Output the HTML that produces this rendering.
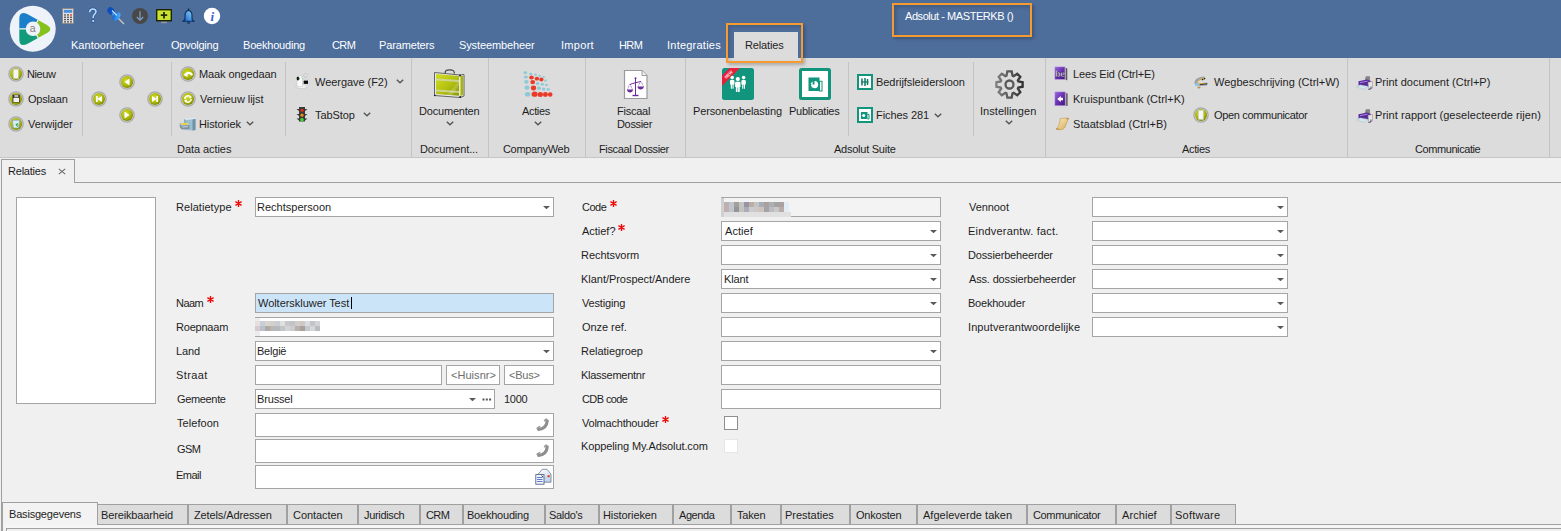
<!DOCTYPE html><html><head><meta charset="utf-8"><style>
html,body{margin:0;padding:0;}
body{width:1561px;height:531px;overflow:hidden;position:relative;background:#f0f0f0;font-family:"Liberation Sans",sans-serif;font-size:11px;color:#1e1e1e;}
.t{position:absolute;white-space:nowrap;line-height:13px;font-size:11px;}
</style></head><body>
<div style="position:absolute;left:0px;top:0px;width:1561px;height:58px;background:#4d6d9b"></div>
<div class="t" style="left:71px;top:39px;letter-spacing:0.025px;color:#ffffff;">Kantoorbeheer</div>
<div class="t" style="left:171px;top:39px;letter-spacing:-0.250px;color:#ffffff;">Opvolging</div>
<div class="t" style="left:243px;top:39px;letter-spacing:-0.200px;color:#ffffff;">Boekhouding</div>
<div class="t" style="left:332px;top:39px;letter-spacing:-0.600px;color:#ffffff;">CRM</div>
<div class="t" style="left:379px;top:39px;letter-spacing:-0.144px;color:#ffffff;">Parameters</div>
<div class="t" style="left:459px;top:39px;letter-spacing:-0.125px;color:#ffffff;">Systeembeheer</div>
<div class="t" style="left:561px;top:39px;letter-spacing:0.300px;color:#ffffff;">Import</div>
<div class="t" style="left:619px;top:39px;letter-spacing:-0.600px;color:#ffffff;">HRM</div>
<div class="t" style="left:667px;top:39px;letter-spacing:0.230px;color:#ffffff;">Integraties</div>
<div style="position:absolute;left:734px;top:32px;width:64px;height:27px;background:#dcdcdc"></div>
<div class="t" style="left:745px;top:39px;letter-spacing:-0.143px;">Relaties</div>
<div style="position:absolute;left:892px;top:3px;width:140px;height:34px;box-sizing:border-box;border:2px solid #f59b32;box-shadow:2px 2px 3px rgba(0,0,0,0.22), inset 2px 2px 4px rgba(0,0,0,0.18)"></div>
<div class="t" style="left:905px;top:10px;letter-spacing:-0.435px;color:#ffffff;">Adsolut - MASTERKB ()</div>
<div style="position:absolute;left:0px;top:58px;width:1561px;height:99px;background:#dcdcdc"></div>
<div style="position:absolute;left:0px;top:157px;width:1561px;height:1px;background:#c6c6c6"></div>
<div style="position:absolute;left:411px;top:58px;width:1px;height:99px;background:#c4c4c4"></div>
<div style="position:absolute;left:488px;top:58px;width:1px;height:99px;background:#c4c4c4"></div>
<div style="position:absolute;left:585px;top:58px;width:1px;height:99px;background:#c4c4c4"></div>
<div style="position:absolute;left:685px;top:58px;width:1px;height:99px;background:#c4c4c4"></div>
<div style="position:absolute;left:1045px;top:58px;width:1px;height:99px;background:#c4c4c4"></div>
<div style="position:absolute;left:1347px;top:58px;width:1px;height:99px;background:#c4c4c4"></div>
<div style="position:absolute;left:1549px;top:58px;width:1px;height:99px;background:#c4c4c4"></div>
<div style="position:absolute;left:82px;top:62px;width:1px;height:74px;background:#c4c4c4"></div>
<div style="position:absolute;left:171px;top:62px;width:1px;height:74px;background:#c4c4c4"></div>
<div style="position:absolute;left:285px;top:62px;width:1px;height:74px;background:#c4c4c4"></div>
<div style="position:absolute;left:848px;top:62px;width:1px;height:74px;background:#c4c4c4"></div>
<div style="position:absolute;left:973px;top:62px;width:1px;height:74px;background:#c4c4c4"></div>
<div style="position:absolute;left:726px;top:23px;width:77px;height:40px;box-sizing:border-box;border:2px solid #f59b32;box-shadow:2px 2px 3px rgba(0,0,0,0.22), inset 2px 2px 4px rgba(0,0,0,0.15)"></div>
<div class="t" style="left:27px;top:68px;letter-spacing:-0.400px;">Nieuw</div>
<div class="t" style="left:28px;top:93px;letter-spacing:-0.200px;">Opslaan</div>
<div class="t" style="left:28px;top:118px;letter-spacing:-0.062px;">Verwijder</div>
<div class="t" style="left:199px;top:68px;letter-spacing:-0.100px;">Maak ongedaan</div>
<div class="t" style="left:200px;top:93px;letter-spacing:-0.054px;">Vernieuw lijst</div>
<div class="t" style="left:199px;top:118px;letter-spacing:-0.113px;">Historiek</div>
<div class="t" style="left:315px;top:76px;letter-spacing:-0.050px;">Weergave (F2)</div>
<div class="t" style="left:315px;top:109px;letter-spacing:-0.067px;">TabStop</div>
<div class="t" style="left:177px;top:143px;letter-spacing:-0.060px;">Data acties</div>
<div class="t" style="left:419px;top:105px;letter-spacing:-0.189px;">Documenten</div>
<div class="t" style="left:420px;top:143px;letter-spacing:-0.120px;">Document...</div>
<div class="t" style="left:522px;top:105px;letter-spacing:-0.340px;">Acties</div>
<div class="t" style="left:503px;top:143px;letter-spacing:-0.333px;">CompanyWeb</div>
<div class="t" style="left:617px;top:105px;letter-spacing:-0.250px;">Fiscaal</div>
<div class="t" style="left:617px;top:118px;letter-spacing:-0.333px;">Dossier</div>
<div class="t" style="left:599px;top:143px;letter-spacing:-0.357px;">Fiscaal Dossier</div>
<div class="t" style="left:693px;top:105px;letter-spacing:-0.131px;">Personenbelasting</div>
<div class="t" style="left:789px;top:105px;letter-spacing:-0.250px;">Publicaties</div>
<div class="t" style="left:876px;top:76px;letter-spacing:-0.056px;">Bedrijfsleidersloon</div>
<div class="t" style="left:876px;top:109px;letter-spacing:-0.078px;">Fiches 281</div>
<div class="t" style="left:980px;top:105px;letter-spacing:0.055px;">Instellingen</div>
<div class="t" style="left:834px;top:143px;letter-spacing:-0.250px;">Adsolut Suite</div>
<div class="t" style="left:1073px;top:68px;letter-spacing:-0.138px;">Lees Eid (Ctrl+E)</div>
<div class="t" style="left:1073px;top:93px;letter-spacing:0.005px;">Kruispuntbank (Ctrl+K)</div>
<div class="t" style="left:1073px;top:118px;letter-spacing:0.039px;">Staatsblad (Ctrl+B)</div>
<div class="t" style="left:1214px;top:76px;letter-spacing:0.022px;">Wegbeschrijving (Ctrl+W)</div>
<div class="t" style="left:1214px;top:109px;letter-spacing:-0.331px;">Open communicator</div>
<div class="t" style="left:1182px;top:143px;letter-spacing:-0.340px;">Acties</div>
<div class="t" style="left:1375px;top:76px;letter-spacing:0.005px;">Print document (Ctrl+P)</div>
<div class="t" style="left:1375px;top:109px;letter-spacing:0.059px;">Print rapport (geselecteerde rijen)</div>
<div class="t" style="left:1415px;top:143px;letter-spacing:-0.418px;">Communicatie</div>
<div style="position:absolute;left:74px;top:182px;width:1487px;height:1px;background:#a0a0a0"></div>
<div style="position:absolute;left:1px;top:159px;width:74px;height:24px;box-sizing:border-box;border:1px solid #a0a0a0;border-bottom:none;background:#f0f0f0"></div>
<div style="position:absolute;left:1px;top:182px;width:1px;height:349px;background:#a0a0a0"></div>
<div class="t" style="left:8px;top:165px;letter-spacing:-0.214px;">Relaties</div>
<svg style="position:absolute;left:58px;top:168px" width="8" height="7" viewBox="0 0 8 7"><path d="M0.8 0.8 L7.2 6.2 M7.2 0.8 L0.8 6.2" stroke="#6a6a6a" stroke-width="1.1"/></svg>
<div style="position:absolute;left:16px;top:197px;width:140px;height:207px;box-sizing:border-box;border:1px solid #a5a5a5;background:#fff"></div>
<div class="t" style="left:176px;top:201px;letter-spacing:0.050px;">Relatietype</div>
<svg style="position:absolute;left:235px;top:200px" width="7" height="7" viewBox="0 0 7 7"><path d="M3.5 0 V7 M0.4 1.7 L6.6 5.3 M6.6 1.7 L0.4 5.3" stroke="#f00808" stroke-width="1.35"/></svg>
<div style="position:absolute;left:255px;top:197px;width:299px;height:20px;box-sizing:border-box;border:1px solid #a5a5a5;background:#fff"></div>
<div class="t" style="left:257px;top:201px;letter-spacing:0.017px;">Rechtspersoon</div>
<div class="t" style="left:176px;top:297px;letter-spacing:-0.533px;">Naam</div>
<svg style="position:absolute;left:207px;top:296px" width="7" height="7" viewBox="0 0 7 7"><path d="M3.5 0 V7 M0.4 1.7 L6.6 5.3 M6.6 1.7 L0.4 5.3" stroke="#f00808" stroke-width="1.35"/></svg>
<div style="position:absolute;left:255px;top:293px;width:299px;height:20px;box-sizing:border-box;border:1px solid #a5a5a5;background:#cce4f7"></div>
<div class="t" style="left:258px;top:297px;letter-spacing:-0.041px;">Wolterskluwer Test</div>
<div style="position:absolute;left:351px;top:297px;width:1px;height:12px;background:#000"></div>
<div class="t" style="left:176px;top:321px;letter-spacing:-0.214px;">Roepnaam</div>
<div style="position:absolute;left:255px;top:317px;width:299px;height:20px;box-sizing:border-box;border:1px solid #a5a5a5;background:#fff"></div>
<div class="t" style="left:176px;top:345px;letter-spacing:-0.133px;">Land</div>
<div style="position:absolute;left:255px;top:341px;width:299px;height:20px;box-sizing:border-box;border:1px solid #a5a5a5;background:#fff"></div>
<div class="t" style="left:257px;top:345px;letter-spacing:-0.220px;">België</div>
<div class="t" style="left:176px;top:369px;letter-spacing:0.400px;">Straat</div>
<div style="position:absolute;left:255px;top:365px;width:187px;height:20px;box-sizing:border-box;border:1px solid #a5a5a5;background:#fff"></div>
<div style="position:absolute;left:446px;top:365px;width:54px;height:20px;box-sizing:border-box;border:1px solid #a5a5a5;background:#fff"></div>
<div style="position:absolute;left:504px;top:365px;width:50px;height:20px;box-sizing:border-box;border:1px solid #a5a5a5;background:#fff"></div>
<div class="t" style="left:451px;top:369px;letter-spacing:0.043px;color:#6d6d6d;">&lt;Huisnr&gt;</div>
<div class="t" style="left:509px;top:369px;letter-spacing:-0.225px;color:#6d6d6d;">&lt;Bus&gt;</div>
<div class="t" style="left:177px;top:393px;letter-spacing:-0.343px;">Gemeente</div>
<div style="position:absolute;left:255px;top:389px;width:240px;height:20px;box-sizing:border-box;border:1px solid #a5a5a5;background:#fff"></div>
<div class="t" style="left:257px;top:393px;letter-spacing:-0.150px;">Brussel</div>
<div class="t" style="left:504px;top:393px;letter-spacing:-0.300px;">1000</div>
<div class="t" style="left:177px;top:417px;letter-spacing:0.057px;">Telefoon</div>
<div style="position:absolute;left:255px;top:413px;width:299px;height:24px;box-sizing:border-box;border:1px solid #a5a5a5;background:#fff"></div>
<div class="t" style="left:177px;top:443px;letter-spacing:-0.600px;">GSM</div>
<div style="position:absolute;left:255px;top:439px;width:299px;height:24px;box-sizing:border-box;border:1px solid #a5a5a5;background:#fff"></div>
<div class="t" style="left:176px;top:469px;letter-spacing:-0.525px;">Email</div>
<div style="position:absolute;left:255px;top:465px;width:299px;height:24px;box-sizing:border-box;border:1px solid #a5a5a5;background:#fff"></div>
<div style="position:absolute;left:255px;top:318px;width:5px;height:18px;background:#ececec"></div>
<svg style="position:absolute;left:255px;top:321px" width="65" height="10" viewBox="0 0 65 10"><rect x="0" y="0" width="5" height="5" fill="#e6e0dc"/><rect x="5" y="0" width="5" height="5" fill="#c8ced8"/><rect x="10" y="0" width="5" height="5" fill="#d8d4d0"/><rect x="15" y="0" width="5" height="5" fill="#d4d0cc"/><rect x="20" y="0" width="5" height="5" fill="#c8ccd4"/><rect x="25" y="0" width="5" height="5" fill="#e0e0e0"/><rect x="30" y="0" width="5" height="5" fill="#c8c8c8"/><rect x="35" y="0" width="5" height="5" fill="#c0c4c8"/><rect x="40" y="0" width="5" height="5" fill="#d4ccc8"/><rect x="45" y="0" width="5" height="5" fill="#ccc8c4"/><rect x="50" y="0" width="5" height="5" fill="#d8dce0"/><rect x="55" y="0" width="5" height="5" fill="#c4c4c4"/><rect x="60" y="0" width="5" height="5" fill="#d0d4d8"/><rect x="0" y="5" width="5" height="5" fill="#d8c8d0"/><rect x="5" y="5" width="5" height="5" fill="#b8c0cc"/><rect x="10" y="5" width="5" height="5" fill="#b0a8a4"/><rect x="15" y="5" width="5" height="5" fill="#b8b8b0"/><rect x="20" y="5" width="5" height="5" fill="#b4b8c0"/><rect x="25" y="5" width="5" height="5" fill="#c4c4c4"/><rect x="30" y="5" width="5" height="5" fill="#d0d4d8"/><rect x="35" y="5" width="5" height="5" fill="#cccccc"/><rect x="40" y="5" width="5" height="5" fill="#b8b0ac"/><rect x="45" y="5" width="5" height="5" fill="#a8a09c"/><rect x="50" y="5" width="5" height="5" fill="#c4c8cc"/><rect x="55" y="5" width="5" height="5" fill="#d4d8d8"/><rect x="60" y="5" width="5" height="5" fill="#b8bcc0"/></svg>
<div style="position:absolute;left:721px;top:197px;width:220px;height:20px;box-sizing:border-box;border:1px solid #a5a5a5;background:#f3f3f3"></div>
<div style="position:absolute;left:721px;top:198px;width:3px;height:19px;background:#d0d0d0"></div>
<div style="position:absolute;left:724px;top:212px;width:67px;height:5px;background:#e0e0e0"></div>
<div style="position:absolute;left:784px;top:202px;width:5px;height:10px;background:#e4ecf4"></div>
<svg style="position:absolute;left:724px;top:202px" width="60" height="10" viewBox="0 0 60 10"><rect x="0" y="0" width="5" height="5" fill="#bfb0b0"/><rect x="5" y="0" width="5" height="5" fill="#c0c4cc"/><rect x="10" y="0" width="5" height="5" fill="#a0a0a0"/><rect x="15" y="0" width="5" height="5" fill="#c4c4c0"/><rect x="20" y="0" width="5" height="5" fill="#9894a8"/><rect x="25" y="0" width="5" height="5" fill="#bcaea4"/><rect x="30" y="0" width="5" height="5" fill="#c4c4c0"/><rect x="35" y="0" width="5" height="5" fill="#a8acb8"/><rect x="40" y="0" width="5" height="5" fill="#a8a09c"/><rect x="45" y="0" width="5" height="5" fill="#acb0b4"/><rect x="50" y="0" width="5" height="5" fill="#a0a4a4"/><rect x="55" y="0" width="5" height="5" fill="#aca0a0"/><rect x="0" y="5" width="5" height="5" fill="#c0b0b0"/><rect x="5" y="5" width="5" height="5" fill="#c0c4cc"/><rect x="10" y="5" width="5" height="5" fill="#969498"/><rect x="15" y="5" width="5" height="5" fill="#c4c2be"/><rect x="20" y="5" width="5" height="5" fill="#acacb8"/><rect x="25" y="5" width="5" height="5" fill="#cccccc"/><rect x="30" y="5" width="5" height="5" fill="#ccc8c8"/><rect x="35" y="5" width="5" height="5" fill="#ccc4bc"/><rect x="40" y="5" width="5" height="5" fill="#a4a4a8"/><rect x="45" y="5" width="5" height="5" fill="#bcbcc0"/><rect x="50" y="5" width="5" height="5" fill="#c8c8c8"/><rect x="55" y="5" width="5" height="5" fill="#b8aca8"/></svg>
<div class="t" style="left:582px;top:201px;letter-spacing:-0.500px;">Code</div>
<svg style="position:absolute;left:610px;top:200px" width="7" height="7" viewBox="0 0 7 7"><path d="M3.5 0 V7 M0.4 1.7 L6.6 5.3 M6.6 1.7 L0.4 5.3" stroke="#f00808" stroke-width="1.35"/></svg>
<div class="t" style="left:582px;top:225px;letter-spacing:-0.017px;">Actief?</div>
<svg style="position:absolute;left:618px;top:224px" width="7" height="7" viewBox="0 0 7 7"><path d="M3.5 0 V7 M0.4 1.7 L6.6 5.3 M6.6 1.7 L0.4 5.3" stroke="#f00808" stroke-width="1.35"/></svg>
<div style="position:absolute;left:721px;top:221px;width:220px;height:20px;box-sizing:border-box;border:1px solid #a5a5a5;background:#fff"></div>
<div class="t" style="left:725px;top:225px;letter-spacing:0.060px;">Actief</div>
<div class="t" style="left:581px;top:249px;letter-spacing:-0.056px;">Rechtsvorm</div>
<div style="position:absolute;left:721px;top:245px;width:220px;height:20px;box-sizing:border-box;border:1px solid #a5a5a5;background:#fff"></div>
<div class="t" style="left:581px;top:273px;letter-spacing:-0.035px;">Klant/Prospect/Andere</div>
<div style="position:absolute;left:721px;top:269px;width:220px;height:20px;box-sizing:border-box;border:1px solid #a5a5a5;background:#fff"></div>
<div class="t" style="left:724px;top:273px;letter-spacing:-0.100px;">Klant</div>
<div class="t" style="left:582px;top:297px;letter-spacing:-0.163px;">Vestiging</div>
<div style="position:absolute;left:721px;top:293px;width:220px;height:20px;box-sizing:border-box;border:1px solid #a5a5a5;background:#fff"></div>
<div class="t" style="left:582px;top:321px;letter-spacing:-0.050px;">Onze ref.</div>
<div style="position:absolute;left:721px;top:317px;width:220px;height:20px;box-sizing:border-box;border:1px solid #a5a5a5;background:#fff"></div>
<div class="t" style="left:581px;top:345px;letter-spacing:-0.036px;">Relatiegroep</div>
<div style="position:absolute;left:721px;top:341px;width:220px;height:20px;box-sizing:border-box;border:1px solid #a5a5a5;background:#fff"></div>
<div class="t" style="left:581px;top:369px;letter-spacing:-0.264px;">Klassementnr</div>
<div style="position:absolute;left:721px;top:365px;width:220px;height:20px;box-sizing:border-box;border:1px solid #a5a5a5;background:#fff"></div>
<div class="t" style="left:582px;top:393px;letter-spacing:-0.600px;">CDB code</div>
<div style="position:absolute;left:721px;top:389px;width:220px;height:20px;box-sizing:border-box;border:1px solid #a5a5a5;background:#fff"></div>
<div class="t" style="left:582px;top:417px;letter-spacing:-0.223px;">Volmachthouder</div>
<svg style="position:absolute;left:662px;top:416px" width="7" height="7" viewBox="0 0 7 7"><path d="M3.5 0 V7 M0.4 1.7 L6.6 5.3 M6.6 1.7 L0.4 5.3" stroke="#f00808" stroke-width="1.35"/></svg>
<div style="position:absolute;left:724px;top:416px;width:14px;height:14px;box-sizing:border-box;border:1px solid #8e8e8e;background:#fff"></div>
<div class="t" style="left:581px;top:440px;letter-spacing:-0.109px;">Koppeling My.Adsolut.com</div>
<div style="position:absolute;left:724px;top:439px;width:14px;height:14px;box-sizing:border-box;border:1px solid #e6e6e6;background:#ffffff"></div>
<div class="t" style="left:969px;top:201px;letter-spacing:-0.067px;">Vennoot</div>
<div style="position:absolute;left:1092px;top:197px;width:196px;height:20px;box-sizing:border-box;border:1px solid #a5a5a5;background:#fff"></div>
<div class="t" style="left:968px;top:225px;letter-spacing:0.200px;">Eindverantw. fact.</div>
<div style="position:absolute;left:1092px;top:221px;width:196px;height:20px;box-sizing:border-box;border:1px solid #a5a5a5;background:#fff"></div>
<div class="t" style="left:968px;top:249px;letter-spacing:-0.160px;">Dossierbeheerder</div>
<div style="position:absolute;left:1092px;top:245px;width:196px;height:20px;box-sizing:border-box;border:1px solid #a5a5a5;background:#fff"></div>
<div class="t" style="left:969px;top:273px;letter-spacing:-0.160px;">Ass. dossierbeheerder</div>
<div style="position:absolute;left:1092px;top:269px;width:196px;height:20px;box-sizing:border-box;border:1px solid #a5a5a5;background:#fff"></div>
<div class="t" style="left:968px;top:297px;letter-spacing:-0.222px;">Boekhouder</div>
<div style="position:absolute;left:1092px;top:293px;width:196px;height:20px;box-sizing:border-box;border:1px solid #a5a5a5;background:#fff"></div>
<div class="t" style="left:968px;top:321px;letter-spacing:0.095px;">Inputverantwoordelijke</div>
<div style="position:absolute;left:1092px;top:317px;width:196px;height:20px;box-sizing:border-box;border:1px solid #a5a5a5;background:#fff"></div>
<div style="position:absolute;left:97px;top:524px;width:1464px;height:1px;background:#a0a0a0"></div>
<div style="position:absolute;left:2px;top:525px;width:1559px;height:3px;background:#f6f6f6"></div>
<div style="position:absolute;left:2px;top:525px;width:4px;height:6px;background:#f3f3f3"></div>
<div style="position:absolute;left:97px;top:504px;width:91px;height:21px;box-sizing:border-box;border:1px solid #a0a0a0;background:#dcdcdc"></div>
<div class="t" style="left:101px;top:509px;letter-spacing:-0.146px;">Bereikbaarheid</div>
<div style="position:absolute;left:188px;top:504px;width:99px;height:21px;box-sizing:border-box;border:1px solid #a0a0a0;background:#dcdcdc"></div>
<div class="t" style="left:194px;top:509px;letter-spacing:-0.121px;">Zetels/Adressen</div>
<div style="position:absolute;left:287px;top:504px;width:71px;height:21px;box-sizing:border-box;border:1px solid #a0a0a0;background:#dcdcdc"></div>
<div class="t" style="left:293px;top:509px;letter-spacing:-0.062px;">Contacten</div>
<div style="position:absolute;left:358px;top:504px;width:62px;height:21px;box-sizing:border-box;border:1px solid #a0a0a0;background:#dcdcdc"></div>
<div class="t" style="left:364px;top:509px;letter-spacing:-0.337px;">Juridisch</div>
<div style="position:absolute;left:420px;top:504px;width:43px;height:21px;box-sizing:border-box;border:1px solid #a0a0a0;background:#dcdcdc"></div>
<div class="t" style="left:426px;top:509px;letter-spacing:-0.600px;">CRM</div>
<div style="position:absolute;left:463px;top:504px;width:82px;height:21px;box-sizing:border-box;border:1px solid #a0a0a0;background:#dcdcdc"></div>
<div class="t" style="left:467px;top:509px;letter-spacing:-0.220px;">Boekhouding</div>
<div style="position:absolute;left:545px;top:504px;width:54px;height:21px;box-sizing:border-box;border:1px solid #a0a0a0;background:#dcdcdc"></div>
<div class="t" style="left:549px;top:509px;letter-spacing:-0.333px;">Saldo's</div>
<div style="position:absolute;left:599px;top:504px;width:74px;height:21px;box-sizing:border-box;border:1px solid #a0a0a0;background:#dcdcdc"></div>
<div class="t" style="left:603px;top:509px;letter-spacing:-0.110px;">Historieken</div>
<div style="position:absolute;left:673px;top:504px;width:58px;height:21px;box-sizing:border-box;border:1px solid #a0a0a0;background:#dcdcdc"></div>
<div class="t" style="left:679px;top:509px;letter-spacing:-0.420px;">Agenda</div>
<div style="position:absolute;left:731px;top:504px;width:50px;height:21px;box-sizing:border-box;border:1px solid #a0a0a0;background:#dcdcdc"></div>
<div class="t" style="left:737px;top:509px;letter-spacing:-0.200px;">Taken</div>
<div style="position:absolute;left:781px;top:504px;width:69px;height:21px;box-sizing:border-box;border:1px solid #a0a0a0;background:#dcdcdc"></div>
<div class="t" style="left:785px;top:509px;letter-spacing:-0.011px;">Prestaties</div>
<div style="position:absolute;left:850px;top:504px;width:67px;height:21px;box-sizing:border-box;border:1px solid #a0a0a0;background:#dcdcdc"></div>
<div class="t" style="left:856px;top:509px;letter-spacing:-0.214px;">Onkosten</div>
<div style="position:absolute;left:917px;top:504px;width:110px;height:21px;box-sizing:border-box;border:1px solid #a0a0a0;background:#dcdcdc"></div>
<div class="t" style="left:923px;top:509px;letter-spacing:0.025px;">Afgeleverde taken</div>
<div style="position:absolute;left:1027px;top:504px;width:89px;height:21px;box-sizing:border-box;border:1px solid #a0a0a0;background:#dcdcdc"></div>
<div class="t" style="left:1033px;top:509px;letter-spacing:-0.345px;">Communicator</div>
<div style="position:absolute;left:1116px;top:504px;width:55px;height:21px;box-sizing:border-box;border:1px solid #a0a0a0;background:#dcdcdc"></div>
<div class="t" style="left:1122px;top:509px;letter-spacing:0.067px;">Archief</div>
<div style="position:absolute;left:1171px;top:504px;width:65px;height:21px;box-sizing:border-box;border:1px solid #a0a0a0;background:#dcdcdc"></div>
<div class="t" style="left:1175px;top:509px;letter-spacing:0.229px;">Software</div>
<div style="position:absolute;left:2px;top:502px;width:96px;height:23px;box-sizing:border-box;border:1px solid #a0a0a0;border-bottom:none;background:#f3f3f3"></div>
<div class="t" style="left:9px;top:508px;letter-spacing:-0.192px;">Basisgegevens</div>
<div style="position:absolute;left:6px;top:528px;width:1561px;height:3px;box-sizing:border-box;border-top:1px solid #a0a0a0;border-left:1px solid #a0a0a0;background:#f0f0f0"></div>
<div style="position:absolute;left:2px;top:502px;width:1px;height:29px;background:#a0a0a0"></div>
<svg style="position:absolute;left:9px;top:5px" width="48" height="48" viewBox="0 0 48 48"><defs><clipPath id="lgc"><path d="M10.30 14.30 Q10.30 4.80 18.64 9.35 L37.16 19.45 Q45.50 24.00 37.16 28.55 L18.64 38.65 Q10.30 43.20 10.30 33.70 Z"/></clipPath></defs><circle cx="23.75" cy="23.85" r="23" fill="#eef2f9"/><g clip-path="url(#lgc)"><path d="M24.00 23.80 L-16.00 23.80 L-10.64 3.80 L4.00 -10.84 L24.00 -16.20 L44.00 -10.84 Z" fill="#1b7fcb"/><path d="M24.00 23.80 L44.00 -10.84 L58.64 3.80 L64.00 23.80 L58.64 43.80 L44.00 58.44 Z" fill="#86c21e"/><path d="M24.00 23.80 L44.00 58.44 L24.00 63.80 L4.00 58.44 L-10.64 43.80 L-16.00 23.80 Z" fill="#129b7b"/><path d="M26.50 19.47 L39.00 -2.18" stroke="#eef2f9" stroke-width="1.2" fill="none"/><path d="M26.50 28.13 L39.00 49.78" stroke="#eef2f9" stroke-width="1.2" fill="none"/><path d="M19.00 23.80 L-6.00 23.80" stroke="#eef2f9" stroke-width="1.2" fill="none"/></g><circle cx="24.00" cy="23.80" r="7.3" fill="#eef2f9"/><text x="23.70" y="27.40" font-family="Liberation Sans" font-size="10.5" fill="#808080" text-anchor="middle">a</text></svg>
<svg style="position:absolute;left:62px;top:8px" width="12" height="16" viewBox="0 0 12 16"><rect x="0.5" y="0.5" width="11" height="15" fill="#e2e2e2" stroke="#8a8a8a"/><rect x="1.8" y="1.8" width="8.4" height="3" fill="#4a8ede"/><rect x="2" y="6.3" width="2" height="1.3" fill="#555"/><rect x="2" y="8.6" width="2" height="1.3" fill="#555"/><rect x="2" y="10.899999999999999" width="2" height="1.3" fill="#555"/><rect x="2" y="13.2" width="2" height="1.3" fill="#555"/><rect x="5" y="6.3" width="2" height="1.3" fill="#555"/><rect x="5" y="8.6" width="2" height="1.3" fill="#555"/><rect x="5" y="10.899999999999999" width="2" height="1.3" fill="#555"/><rect x="5" y="13.2" width="2" height="1.3" fill="#555"/><rect x="8" y="6.3" width="2" height="1.3" fill="#e23030"/><rect x="8" y="8.6" width="2" height="1.3" fill="#555"/><rect x="8" y="10.899999999999999" width="2" height="1.3" fill="#555"/><rect x="8" y="13.2" width="2" height="1.3" fill="#555"/></svg>
<svg style="position:absolute;left:86px;top:7px" width="13" height="17" viewBox="0 0 13 17"><path d="M3.6 5.3 C3.6 3 5 2 6.8 2 C8.8 2 10 3.2 10 4.8 C10 6.8 7.2 7.5 7.2 10.2 V11" fill="none" stroke="#2c5a9e" stroke-width="3"/><circle cx="7.2" cy="14" r="1.9" fill="#2c5a9e"/><path d="M3.6 5.3 C3.6 3 5 2 6.8 2 C8.8 2 10 3.2 10 4.8 C10 6.8 7.2 7.5 7.2 10.2 V11" fill="none" stroke="#b8dcf8" stroke-width="1.6"/><circle cx="7.2" cy="14" r="1.1" fill="#c8e4fc"/></svg>
<svg style="position:absolute;left:106px;top:6px" width="20" height="20" viewBox="0 0 20 20"><defs><linearGradient id="g1" x1="0" y1="0" x2="1" y2="1"><stop offset="0" stop-color="#0a50c8"/><stop offset="0.5" stop-color="#2a90f0"/><stop offset="1" stop-color="#60b8ff"/></linearGradient></defs><line x1="12.5" y1="12.5" x2="18" y2="18" stroke="#c4c4c4" stroke-width="1.4"/><ellipse cx="5" cy="5" rx="4" ry="3.3" transform="rotate(45 5 5)" fill="#0a4ec0"/><path d="M5.5 7.5 L8 5 L10 8.5 L7.5 11 Z" fill="#3a8ae8"/><ellipse cx="10.5" cy="10.5" rx="5" ry="3" transform="rotate(-45 10.5 10.5)" fill="url(#g1)"/><line x1="6" y1="4.5" x2="11" y2="9.5" stroke="#b8e0ff" stroke-width="1.1"/></svg>
<svg style="position:absolute;left:132px;top:8px" width="16" height="16" viewBox="0 0 16 16"><circle cx="8" cy="8" r="8" fill="#484848"/><path d="M8 3.2 V12.2 M4.8 9 L8 12.2 L11.2 9" fill="none" stroke="#7d9fc8" stroke-width="1.2"/></svg>
<svg style="position:absolute;left:156px;top:9px" width="16" height="15" viewBox="0 0 16 15"><rect x="0.7" y="0.7" width="14.6" height="11" fill="#c8e430" stroke="#1e2200" stroke-width="1.4"/><path d="M8 3 V9.5 M4.8 6.2 H11.2" stroke="#2a2a00" stroke-width="1.8"/><rect x="5" y="12.8" width="6" height="1.4" fill="#9a9a9a"/></svg>
<svg style="position:absolute;left:182px;top:8px" width="13" height="17" viewBox="0 0 13 17"><defs><linearGradient id="g2" x1="1" y1="0" x2="0" y2="1"><stop offset="0" stop-color="#a8e4ff"/><stop offset="1" stop-color="#0a5ed0"/></linearGradient></defs><path d="M6.5 1.5 L6.5 2.5 C3.8 3 3 5 3 7.5 L3 11.5 L1 13.3 L12 13.3 L10 11.5 L10 7.5 C10 5 9.2 3 6.5 2.5 Z" fill="url(#g2)" stroke="#0a2e5a" stroke-width="1.1"/><rect x="5.3" y="14.3" width="2.6" height="1.3" fill="#0a2e5a"/><rect x="5.8" y="0.5" width="1.5" height="1.8" fill="#0a2e5a"/></svg>
<svg style="position:absolute;left:203px;top:7px" width="18" height="18" viewBox="0 0 18 18"><circle cx="9" cy="9" r="8.2" fill="#ffffff"/><text x="9.3" y="14" font-family="Liberation Serif" font-style="italic" font-weight="bold" font-size="13" fill="#3a64d6" text-anchor="middle">i</text></svg>
<svg style="position:absolute;left:8px;top:66px" width="16" height="16" viewBox="0 0 16 16"><defs><radialGradient id="g3" cx="0.42" cy="0.38" r="0.65"><stop offset="0" stop-color="#d6df2c"/><stop offset="0.65" stop-color="#aab50a"/><stop offset="1" stop-color="#7c8600"/></radialGradient></defs><circle cx="8" cy="8" r="7.2" fill="#d0d0d0" stroke="#a9a9a9" stroke-width="1.2"/><circle cx="8" cy="8" r="6" fill="url(#g3)"/><path d="M5.5 3.6 L10.3 3.2 L10.3 12.6 L5.5 12.2 Z" fill="#f4f6fa" stroke="#c8d0dc" stroke-width="0.5"/></svg>
<svg style="position:absolute;left:8px;top:91px" width="16" height="16" viewBox="0 0 16 16"><defs><radialGradient id="g4" cx="0.42" cy="0.38" r="0.65"><stop offset="0" stop-color="#d6df2c"/><stop offset="0.65" stop-color="#aab50a"/><stop offset="1" stop-color="#7c8600"/></radialGradient></defs><circle cx="8" cy="8" r="7.2" fill="#d0d0d0" stroke="#a9a9a9" stroke-width="1.2"/><circle cx="8" cy="8" r="6" fill="url(#g4)"/><rect x="4.5" y="3.6" width="7.2" height="8" fill="#2e2e2e" /><rect x="6.3" y="3.9" width="4" height="2.4" fill="#bbb"/><rect x="5.4" y="6.9" width="5.6" height="4.2" fill="#f2f2f2"/></svg>
<svg style="position:absolute;left:8px;top:116px" width="16" height="16" viewBox="0 0 16 16"><defs><radialGradient id="g5" cx="0.42" cy="0.38" r="0.65"><stop offset="0" stop-color="#d6df2c"/><stop offset="0.65" stop-color="#aab50a"/><stop offset="1" stop-color="#7c8600"/></radialGradient></defs><circle cx="8" cy="8" r="7.2" fill="#d0d0d0" stroke="#a9a9a9" stroke-width="1.2"/><circle cx="8" cy="8" r="6" fill="url(#g5)"/><path d="M4.4 4.3 H11.6 L10.6 12 H5.4 Z" fill="#d8ecfa" stroke="#7a9cc0" stroke-width="0.6"/><path d="M9.6 7 L8 8.8 L9.6 10.6 M8.2 8.8 H10.4" fill="none" stroke="#2aa040" stroke-width="1"/></svg>
<svg style="position:absolute;left:91px;top:91px" width="16" height="16" viewBox="0 0 16 16"><defs><radialGradient id="g6" cx="0.42" cy="0.38" r="0.65"><stop offset="0" stop-color="#d6df2c"/><stop offset="0.65" stop-color="#aab50a"/><stop offset="1" stop-color="#7c8600"/></radialGradient></defs><circle cx="8" cy="8" r="7.2" fill="#d0d0d0" stroke="#a9a9a9" stroke-width="1.2"/><circle cx="8" cy="8" r="6" fill="url(#g6)"/><rect x="5" y="5" width="1.7" height="6" fill="#fff"/><path d="M11 5 L6.2 8 L11 11 Z" fill="#fff"/></svg>
<svg style="position:absolute;left:119px;top:74px" width="16" height="16" viewBox="0 0 16 16"><defs><radialGradient id="g7" cx="0.42" cy="0.38" r="0.65"><stop offset="0" stop-color="#d6df2c"/><stop offset="0.65" stop-color="#aab50a"/><stop offset="1" stop-color="#7c8600"/></radialGradient></defs><circle cx="8" cy="8" r="7.2" fill="#d0d0d0" stroke="#a9a9a9" stroke-width="1.2"/><circle cx="8" cy="8" r="6" fill="url(#g7)"/><path d="M10.5 4.5 L5.5 8 L10.5 11.5 Z" fill="#fff"/></svg>
<svg style="position:absolute;left:147px;top:91px" width="16" height="16" viewBox="0 0 16 16"><defs><radialGradient id="g8" cx="0.42" cy="0.38" r="0.65"><stop offset="0" stop-color="#d6df2c"/><stop offset="0.65" stop-color="#aab50a"/><stop offset="1" stop-color="#7c8600"/></radialGradient></defs><circle cx="8" cy="8" r="7.2" fill="#d0d0d0" stroke="#a9a9a9" stroke-width="1.2"/><circle cx="8" cy="8" r="6" fill="url(#g8)"/><rect x="9.3" y="5" width="1.7" height="6" fill="#fff"/><path d="M5 5 L9.8 8 L5 11 Z" fill="#fff"/></svg>
<svg style="position:absolute;left:119px;top:107px" width="16" height="16" viewBox="0 0 16 16"><defs><radialGradient id="g9" cx="0.42" cy="0.38" r="0.65"><stop offset="0" stop-color="#d6df2c"/><stop offset="0.65" stop-color="#aab50a"/><stop offset="1" stop-color="#7c8600"/></radialGradient></defs><circle cx="8" cy="8" r="7.2" fill="#d0d0d0" stroke="#a9a9a9" stroke-width="1.2"/><circle cx="8" cy="8" r="6" fill="url(#g9)"/><path d="M5.5 4.5 L10.5 8 L5.5 11.5 Z" fill="#fff"/></svg>
<svg style="position:absolute;left:180px;top:66px" width="16" height="16" viewBox="0 0 16 16"><defs><radialGradient id="g10" cx="0.42" cy="0.38" r="0.65"><stop offset="0" stop-color="#d6df2c"/><stop offset="0.65" stop-color="#aab50a"/><stop offset="1" stop-color="#7c8600"/></radialGradient></defs><circle cx="8" cy="8" r="7.2" fill="#d0d0d0" stroke="#a9a9a9" stroke-width="1.2"/><circle cx="8" cy="8" r="6" fill="url(#g10)"/><path d="M6 8.6 C7.5 6.3 10.5 6 12.2 9.2" stroke="#fff" stroke-width="2.2" fill="none"/><path d="M3.2 8.8 L7.6 6 L7.4 11 Z" fill="#fff"/></svg>
<svg style="position:absolute;left:180px;top:91px" width="16" height="16" viewBox="0 0 16 16"><defs><radialGradient id="g11" cx="0.42" cy="0.38" r="0.65"><stop offset="0" stop-color="#d6df2c"/><stop offset="0.65" stop-color="#aab50a"/><stop offset="1" stop-color="#7c8600"/></radialGradient></defs><circle cx="8" cy="8" r="7.2" fill="#d0d0d0" stroke="#a9a9a9" stroke-width="1.2"/><circle cx="8" cy="8" r="6" fill="url(#g11)"/><path d="M4.8 8 A3.3 3.3 0 0 1 10.8 6.2 M11.2 8 A3.3 3.3 0 0 1 5.2 9.8" fill="none" stroke="#fff" stroke-width="1.5"/><path d="M9.8 4.5 L12 6.8 L9.2 7.4 Z M6.2 11.5 L4 9.2 L6.8 8.6 Z" fill="#fff"/></svg>
<svg style="position:absolute;left:1193px;top:107px" width="16" height="16" viewBox="0 0 16 16"><defs><radialGradient id="g12" cx="0.42" cy="0.38" r="0.65"><stop offset="0" stop-color="#d6df2c"/><stop offset="0.65" stop-color="#aab50a"/><stop offset="1" stop-color="#7c8600"/></radialGradient></defs><circle cx="8" cy="8" r="7.2" fill="#d0d0d0" stroke="#a9a9a9" stroke-width="1.2"/><circle cx="8" cy="8" r="6" fill="url(#g12)"/><path d="M5.5 3.6 L10.3 3.2 L10.3 12.6 L5.5 12.2 Z" fill="#f4f6fa" stroke="#c8d0dc" stroke-width="0.5"/></svg>
<svg style="position:absolute;left:179px;top:117px" width="17" height="14" viewBox="0 0 17 14"><path d="M5 2 L14.5 0.8 L16.5 2 L7 3 Z" fill="#dceef6"/><path d="M7 3 L16.5 2 L16.5 13 L13.5 13.6 L7 13 Z" fill="#9cc0d0"/><path d="M13.5 2.4 L16.5 2 L16.5 13 L13.5 13.6 Z" fill="#6e93a6"/><path d="M5 2 L7 3 L7 13 L5 12 Z" fill="#8ab0c0"/><path d="M0.8 6.2 L9.5 5.6 L10.5 8 L10.5 12 L2.5 12.6 L0.8 10 Z" fill="#7e929e"/><path d="M0.8 6.2 L9.5 5.6 L10.5 8 L2 8.6 Z" fill="#b8d0dc"/><path d="M2.2 6.2 L8.5 5.8 L8.8 7.4 L2.5 7.8 Z" fill="#f2d22a"/><path d="M3 10 L9 9.6" stroke="#d8e6ee" stroke-width="0.8"/></svg>
<svg style="position:absolute;left:246px;top:121px" width="8" height="5" viewBox="0 0 8 5"><path d="M0.8 0.8 L4 3.8 L7.2 0.8" fill="none" stroke="#555" stroke-width="1.4"/></svg>
<svg style="position:absolute;left:295px;top:73px" width="15" height="16" viewBox="0 0 15 16"><ellipse cx="6.5" cy="13.6" rx="5.6" ry="1.9" fill="#f4f4f4" stroke="#b8b8b8" stroke-width="0.5"/><path d="M2 3.5 Q2 2.5 3 2.5 L7.5 2.5 L7.5 13.5 L2 13.5 Z" fill="#fafafa" stroke="#c0c0c0" stroke-width="0.5"/><path d="M6 4 L10.5 2.5 L11 4.5 L7 5.5 Z" fill="#e6e6e6" stroke="#b0b0b0" stroke-width="0.4"/><circle cx="10.6" cy="2.2" r="1.7" fill="#e8e8e8" stroke="#aaa" stroke-width="0.5"/><ellipse cx="3" cy="5.5" rx="1.3" ry="2" fill="#111"/><path d="M3.8 4.5 Q4.3 5.5 3.8 6.8" stroke="#2a9a2a" stroke-width="0.7" fill="none"/><rect x="7.6" y="6.6" width="6.4" height="5.2" fill="#fff" stroke="#c8c8c8" stroke-width="0.5"/><rect x="8.6" y="7.5" width="4.5" height="3.4" fill="#0a0a0a"/></svg>
<svg style="position:absolute;left:396px;top:79px" width="8" height="5" viewBox="0 0 8 5"><path d="M0.8 0.8 L4 3.8 L7.2 0.8" fill="none" stroke="#555" stroke-width="1.4"/></svg>
<svg style="position:absolute;left:296px;top:106px" width="12" height="17" viewBox="0 0 12 17"><path d="M3 1 H9 L9 15.5 H3 Z" fill="#3a3a3a"/><path d="M0.5 3 H3 V5 Z M11.5 3 H9 V5 Z M0.5 8 H3 V10 Z M11.5 8 H9 V10 Z M0.5 12.5 H3 V14.5 Z M11.5 12.5 H9 V14.5 Z" fill="#3a3a3a"/><circle cx="6" cy="4.3" r="1.6" fill="#e03010"/><circle cx="6" cy="9.2" r="1.6" fill="#f09010"/><circle cx="6" cy="13.8" r="1.8" fill="#40e030"/></svg>
<svg style="position:absolute;left:363px;top:112px" width="8" height="5" viewBox="0 0 8 5"><path d="M0.8 0.8 L4 3.8 L7.2 0.8" fill="none" stroke="#555" stroke-width="1.4"/></svg>
<svg style="position:absolute;left:433px;top:68px" width="33" height="30" viewBox="0 0 33 30"><defs><linearGradient id="g13" x1="0" y1="0" x2="1" y2="1"><stop offset="0" stop-color="#d2e020"/><stop offset="0.55" stop-color="#b2c010"/><stop offset="1" stop-color="#8a9a00"/></linearGradient></defs><path d="M12.2 5.2 C12.2 2.6 13.2 1.8 16.8 1.8 C20.4 1.8 21.4 2.6 21.4 5.6" fill="none" stroke="#444" stroke-width="1.3"/><path d="M1.5 4.5 L27 7 L31 6.5 L31 28 L27 29.5 L1.5 27.5 Z" fill="#e8e8e8" stroke="#444" stroke-width="0.8"/><path d="M3 6 L26 8 L26 27.8 L3 26 Z" fill="url(#g13)"/><path d="M27.5 8 L30 7.7 L30 27 L27.5 28 Z" fill="#a8b800"/><path d="M3 10.5 L26 12 L26 14 L3 12.5 Z M3 21.5 L26 23 L26 25 L3 23.5 Z" fill="#d4d8b0" opacity="0.8"/><path d="M14 27 L25.5 13 L26 13 L26 17 L19 27.5 Z" fill="#fff" opacity="0.18"/><circle cx="27" cy="7.4" r="1" fill="#222"/><circle cx="1.8" cy="27.3" r="0.9" fill="#222"/><circle cx="27.2" cy="29" r="1" fill="#222"/></svg>
<svg style="position:absolute;left:446px;top:121px" width="8" height="5" viewBox="0 0 8 5"><path d="M0.8 0.8 L4 3.8 L7.2 0.8" fill="none" stroke="#555" stroke-width="1.4"/></svg>
<svg style="position:absolute;left:518px;top:66px" width="38" height="34" viewBox="0 0 38 34"><ellipse cx="7.3" cy="6.7" rx="1.9" ry="1.4" fill="#8ccad6"/><ellipse cx="12.7" cy="7.9" rx="1.5" ry="1.2" fill="#8ccad6"/><ellipse cx="17.5" cy="8.7" rx="1.4" ry="1.1" fill="#8ccad6"/><ellipse cx="21.7" cy="9.8" rx="1.3" ry="1.0" fill="#8ccad6"/><ellipse cx="25.7" cy="11.0" rx="1.2" ry="1.0" fill="#8ccad6"/><ellipse cx="7.9" cy="11.0" rx="2.0" ry="1.6" fill="#8ccad6"/><ellipse cx="13.5" cy="11.5" rx="2.3" ry="2.0" fill="#ea3a2a"/><ellipse cx="18.9" cy="12.7" rx="2.2" ry="1.9" fill="#ea3a2a"/><ellipse cx="23.4" cy="13.5" rx="2.1" ry="1.9" fill="#ea3a2a"/><ellipse cx="27.4" cy="14.7" rx="1.3" ry="1.1" fill="#8ccad6"/><ellipse cx="8.4" cy="15.8" rx="2.2" ry="1.9" fill="#8ccad6"/><ellipse cx="14.7" cy="16.1" rx="2.4" ry="2.2" fill="#ea3a2a"/><ellipse cx="19.5" cy="17.5" rx="1.8" ry="1.6" fill="#8ccad6"/><ellipse cx="24.3" cy="18.3" rx="1.6" ry="1.4" fill="#8ccad6"/><ellipse cx="28.5" cy="18.9" rx="1.4" ry="1.2" fill="#8ccad6"/><ellipse cx="9.0" cy="21.7" rx="2.5" ry="2.1" fill="#8ccad6"/><ellipse cx="15.5" cy="22.0" rx="2.6" ry="2.4" fill="#ea3a2a"/><ellipse cx="20.9" cy="22.3" rx="2.0" ry="1.8" fill="#8ccad6"/><ellipse cx="25.7" cy="22.9" rx="1.8" ry="1.5" fill="#8ccad6"/><ellipse cx="30.2" cy="23.4" rx="1.5" ry="1.3" fill="#8ccad6"/><ellipse cx="9.6" cy="28.2" rx="2.8" ry="2.3" fill="#8ccad6"/><ellipse cx="16.6" cy="28.2" rx="3.0" ry="2.6" fill="#ea3a2a"/><ellipse cx="22.3" cy="28.4" rx="2.7" ry="2.5" fill="#ea3a2a"/><ellipse cx="27.4" cy="28.5" rx="2.5" ry="2.4" fill="#ea3a2a"/><ellipse cx="32.2" cy="28.5" rx="2.3" ry="2.2" fill="#ea3a2a"/></svg>
<svg style="position:absolute;left:534px;top:121px" width="8" height="5" viewBox="0 0 8 5"><path d="M0.8 0.8 L4 3.8 L7.2 0.8" fill="none" stroke="#555" stroke-width="1.4"/></svg>
<svg style="position:absolute;left:623px;top:69px" width="26" height="31" viewBox="0 0 26 31"><path d="M1.5 1.5 H19 L24 6.5 V29.5 H1.5 Z" fill="#fff" stroke="#9a9a9a" stroke-width="1.2"/><path d="M19 1.5 V6.5 H24" fill="#eee" stroke="#9a9a9a" stroke-width="1"/><g stroke="#6b2c9c" fill="none" stroke-width="1"><line x1="12.5" y1="9" x2="12.5" y2="26.5"/><line x1="9.5" y1="26.5" x2="15.5" y2="26.5" stroke-width="1.4"/><path d="M7 15.5 C9 14.5 15 13 18 12.5"/><path d="M6.5 15.5 L4.5 20.5 M7 15.5 L9.5 20.5 M17.5 12.5 L15 17.5 M18 12.5 L20.5 17.5" stroke-width="0.6" stroke-dasharray="1 0.6"/></g><path d="M4 20.5 H10 C10 22.5 8.5 23.5 7 23.5 C5.5 23.5 4 22.5 4 20.5 Z M14.5 17.5 H20.8 C20.8 19.5 19.3 20.5 17.7 20.5 C16.1 20.5 14.5 19.5 14.5 17.5 Z" fill="#6b2c9c"/><circle cx="12.5" cy="9.3" r="1" fill="#6b2c9c"/></svg>
<svg style="position:absolute;left:722px;top:68px" width="32" height="32" viewBox="0 0 32 32"><defs><clipPath id="pbc"><rect x="0" y="0" width="32" height="32" rx="2.5"/></clipPath></defs><g clip-path="url(#pbc)"><rect width="32" height="32" fill="#11957d"/><path d="M7.5 0 H18 L0 18 V7.5 Z" fill="#e61e3c"/></g><text transform="translate(6.6 6.6) rotate(-45)" x="0" y="1.5" font-family="Liberation Sans" font-size="4.2" font-weight="bold" fill="#fff" text-anchor="middle" opacity="0.9">NEW</text><g fill="#fff"><circle cx="10.2" cy="9.6" r="1.8"/><path d="M7.999999999999999 13 Q7.999999999999999 12 9.0 12 H11.399999999999999 Q12.399999999999999 12 12.399999999999999 13 V16.4 H11.599999999999998 V20.8 H10.5 V16.84 H9.899999999999999 V20.8 H8.799999999999999 V16.4 H7.999999999999999 Z"/><circle cx="21.6" cy="9.6" r="1.8"/><path d="M19.400000000000002 13 Q19.400000000000002 12 20.400000000000002 12 H22.800000000000004 Q23.800000000000004 12 23.800000000000004 13 V16.4 H23.000000000000004 V20.8 H21.900000000000002 V16.84 H21.3 V20.8 H20.200000000000003 V16.4 H19.400000000000002 Z"/><circle cx="15.8" cy="11.100000000000001" r="2.1"/><path d="M13.100000000000001 14.8 Q13.100000000000001 13.8 14.100000000000001 13.8 H17.5 Q18.5 13.8 18.5 14.8 V18.9 H17.7 V24.0 H16.1 V19.41 H15.5 V24.0 H13.900000000000002 V18.9 H13.100000000000001 Z"/></g></svg>
<svg style="position:absolute;left:799px;top:68px" width="32" height="32" viewBox="0 0 32 32"><rect x="1.5" y="1.5" width="29" height="29" rx="1" fill="#fff" stroke="#11957d" stroke-width="3"/><rect x="9.5" y="9.5" width="11" height="13.5" fill="#11957d"/><rect x="20.5" y="13.3" width="2.5" height="9.7" fill="none" stroke="#11957d" stroke-width="1"/><path d="M15.5 13 A3.6 3.6 0 1 1 12 16.6 L15.5 16.6 Z" fill="#fff"/><path d="M11.7 15.8 L13.6 13.2 L13.6 17 Z" fill="#fff"/></svg>
<svg style="position:absolute;left:857px;top:74px" width="16" height="16" viewBox="0 0 16 16"><rect x="1" y="1" width="14" height="14" fill="#fff" stroke="#11957d" stroke-width="2"/><path d="M5 4.5 V11.5 M8 4 V12 M10.5 5 V11" stroke="#0f7a66" stroke-width="1.5"/><path d="M4 8 H11.5" stroke="#0f7a66" stroke-width="1.2"/></svg>
<svg style="position:absolute;left:857px;top:107px" width="16" height="16" viewBox="0 0 16 16"><rect x="1" y="1" width="14" height="14" fill="#fff" stroke="#11957d" stroke-width="2"/><rect x="4" y="5" width="6.5" height="7" fill="#11957d"/><path d="M10.5 7.5 H12 V12 H10.5" fill="none" stroke="#11957d"/><circle cx="6.7" cy="8.6" r="1.5" fill="#fff"/></svg>
<svg style="position:absolute;left:934px;top:113px" width="8" height="5" viewBox="0 0 8 5"><path d="M0.8 0.8 L4 3.8 L7.2 0.8" fill="none" stroke="#555" stroke-width="1.4"/></svg>
<svg style="position:absolute;left:994px;top:70px" width="31" height="30" viewBox="0 0 31 30"><defs><linearGradient id="g14" x1="0" y1="0" x2="1" y2="0"><stop offset="0" stop-color="#808080"/><stop offset="1" stop-color="#303030"/></linearGradient></defs><polygon points="24.30,11.49 28.62,12.32 28.62,16.68 24.30,17.51 23.85,18.59 26.32,22.23 23.23,25.32 19.59,22.85 18.51,23.30 17.68,27.62 13.32,27.62 12.49,23.30 11.41,22.85 7.77,25.32 4.68,22.23 7.15,18.59 6.70,17.51 2.38,16.68 2.38,12.32 6.70,11.49 7.15,10.41 4.68,6.77 7.77,3.68 11.41,6.15 12.49,5.70 13.32,1.38 17.68,1.38 18.51,5.70 19.59,6.15 23.23,3.68 26.32,6.77 23.85,10.41" fill="none" stroke="url(#g14)" stroke-width="2.3" stroke-linejoin="miter"/><circle cx="15.5" cy="14.5" r="4" fill="none" stroke="#585858" stroke-width="2.3"/></svg>
<svg style="position:absolute;left:1005px;top:120px" width="8" height="5" viewBox="0 0 8 5"><path d="M0.8 0.8 L4 3.8 L7.2 0.8" fill="none" stroke="#555" stroke-width="1.4"/></svg>
<svg style="position:absolute;left:1054px;top:66px" width="14" height="15" viewBox="0 0 14 15"><defs><linearGradient id="g15" x1="0" y1="0" x2="1" y2="1"><stop offset="0" stop-color="#9a6ae0"/><stop offset="0.5" stop-color="#6a32b0"/><stop offset="1" stop-color="#3e1478"/></linearGradient></defs><path d="M10.8 1.2 L13.2 2.6 L13.2 14.2 L10.8 13.6 Z" fill="#9a9a9a"/><path d="M12 2 L13.2 2.6 L13.2 14.2 L12 13.9 Z" fill="#5a5a5a"/><rect x="0.8" y="0.8" width="10.2" height="12.8" fill="url(#g15)" stroke="#c8b8e8" stroke-width="0.6"/><text x="6" y="10.8" font-family="Liberation Sans" font-weight="bold" font-size="8.2" fill="#fff" stroke="#2a0a50" stroke-width="0.35" text-anchor="middle">be</text></svg>
<svg style="position:absolute;left:1054px;top:91px" width="14" height="16" viewBox="0 0 14 16"><defs><linearGradient id="g15" x1="0" y1="0" x2="1" y2="1"><stop offset="0" stop-color="#9a6ae0"/><stop offset="0.5" stop-color="#6a32b0"/><stop offset="1" stop-color="#3e1478"/></linearGradient></defs><path d="M11 1.2 L13.5 2.6 L13.5 15 L11 14.6 Z" fill="#9a9a9a"/><path d="M12.3 2 L13.5 2.6 L13.5 15 L12.3 14.8 Z" fill="#5a5a5a"/><rect x="0.8" y="0.8" width="10.4" height="14" fill="url(#g15)" stroke="#c8b8e8" stroke-width="0.6"/><path d="M3.2 8 L6.8 5 V6.8 H9 V9.2 H6.8 V11 Z" fill="#fff"/></svg>
<svg style="position:absolute;left:1055px;top:117px" width="15" height="14" viewBox="0 0 15 14"><defs><linearGradient id="g16" x1="0" y1="0" x2="1" y2="1"><stop offset="0" stop-color="#fbf0c8"/><stop offset="1" stop-color="#d8a850"/></linearGradient></defs><path d="M5 1.8 C8 1 11 1 13.8 1.6 C12.6 3 11.6 6 10.2 9.6 C9.2 12 7.2 13 4.2 12.6 L1 12.3 C3.5 10 4.4 7 5 4.2 Z" fill="url(#g16)" stroke="#c09048" stroke-width="0.6"/><path d="M13.8 1.6 C12.5 0.6 11.5 1.6 12.2 2.8" fill="none" stroke="#b88838" stroke-width="0.8"/><path d="M1 12.3 C2.2 11.2 3.8 11.5 4.4 12.8" fill="none" stroke="#b88838" stroke-width="0.8"/></svg>
<svg style="position:absolute;left:1194px;top:76px" width="14" height="13" viewBox="0 0 14 13"><path d="M10.5 2 C5 2 1.5 4.5 2 7 C2.6 8.8 7 8.8 13 8" fill="none" stroke="#9aa2aa" stroke-width="3"/><path d="M10.5 2.2 C6.5 2.6 3.2 4.6 3.6 6.6 C4 7.8 7 8 11 7.4" fill="none" stroke="#f0b424" stroke-width="1"/><path d="M6 8.6 L13.5 7.8" stroke="#2a2a2a" stroke-width="0.9"/><circle cx="8.6" cy="3.6" r="0.8" fill="#222"/><circle cx="10.6" cy="2.6" r="0.8" fill="#222"/><ellipse cx="3" cy="8.6" rx="2.1" ry="1.6" fill="#8ec4ec"/><ellipse cx="5" cy="11.4" rx="1.6" ry="1" fill="#b89050"/></svg>
<svg style="position:absolute;left:1356px;top:76px" width="17" height="14" viewBox="0 0 17 14"><path d="M8.8 4.5 L9.8 0.3 L14 0.3 L14 5 Z" fill="#858585"/><path d="M2.5 5.2 L11 3.6 L15 5 L15 10 L6 11.2 L2.5 9.6 Z" fill="#5a2a9a"/><path d="M4 6.6 L11.5 5.2" stroke="#a888dc" stroke-width="1"/><path d="M12 6.2 L16.5 5.4 L16.5 12 L12.6 13.6 Z" fill="#e6e6e6" stroke="#8a8a8a" stroke-width="0.5"/><path d="M0.5 11.2 L4 8.8 L11.8 10.2 L9.2 13.6 Z" fill="#cfe6ec" stroke="#9ab" stroke-width="0.3"/><path d="M12.6 13.6 L15 12.6 L15 10.5" fill="none" stroke="#3a1a6a" stroke-width="0.8"/></svg>
<svg style="position:absolute;left:1356px;top:109px" width="17" height="14" viewBox="0 0 17 14"><path d="M8.8 4.5 L9.8 0.3 L14 0.3 L14 5 Z" fill="#858585"/><path d="M2.5 5.2 L11 3.6 L15 5 L15 10 L6 11.2 L2.5 9.6 Z" fill="#5a2a9a"/><path d="M4 6.6 L11.5 5.2" stroke="#a888dc" stroke-width="1"/><path d="M12 6.2 L16.5 5.4 L16.5 12 L12.6 13.6 Z" fill="#e6e6e6" stroke="#8a8a8a" stroke-width="0.5"/><path d="M0.5 11.2 L4 8.8 L11.8 10.2 L9.2 13.6 Z" fill="#cfe6ec" stroke="#9ab" stroke-width="0.3"/><path d="M12.6 13.6 L15 12.6 L15 10.5" fill="none" stroke="#3a1a6a" stroke-width="0.8"/></svg>
<svg style="position:absolute;left:536px;top:418px" width="14" height="14" viewBox="0 0 14 14"><path d="M2.6 11.4 Q10.5 10.5 11.2 2.8" fill="none" stroke="#8f8f8f" stroke-width="3.2" stroke-linecap="round"/><path d="M1.2 10.2 L3.6 8.6 M8.6 2.6 L10.2 1" stroke="#9a9a9a" stroke-width="1.6" stroke-linecap="round"/></svg>
<svg style="position:absolute;left:536px;top:444px" width="14" height="14" viewBox="0 0 14 14"><path d="M2.6 11.4 Q10.5 10.5 11.2 2.8" fill="none" stroke="#8f8f8f" stroke-width="3.2" stroke-linecap="round"/><path d="M1.2 10.2 L3.6 8.6 M8.6 2.6 L10.2 1" stroke="#9a9a9a" stroke-width="1.6" stroke-linecap="round"/></svg>
<svg style="position:absolute;left:535px;top:468px" width="17" height="17" viewBox="0 0 17 17"><defs><linearGradient id="g17" x1="0" y1="0" x2="0.3" y2="1"><stop offset="0" stop-color="#ffffff"/><stop offset="1" stop-color="#c4d4ec"/></linearGradient></defs><path d="M3.2 6.2 L7.2 1.3 H12 L16 6.2 V14.2 H3.2 Z" fill="url(#g17)" stroke="#56688a" stroke-width="0.7"/><path d="M3.2 6.2 L9.6 10.5 L16 6.2" fill="none" stroke="#9ab0cc" stroke-width="0.5"/><rect x="12.6" y="7.2" width="2" height="2" fill="#e23a10"/><rect x="0.8" y="6.6" width="8.2" height="9.6" fill="#f2f6fb" stroke="#44587a" stroke-width="0.8"/><path d="M2 9.5 H7.5 M2 11.5 H7.5 M2 13.5 H7.5" fill="none" stroke="#5a7ad0" stroke-width="1"/><path d="M6.5 7.5 L8.2 9" stroke="#222" stroke-width="0.9"/></svg>
<svg style="position:absolute;left:543px;top:206px" width="7" height="3" viewBox="0 0 7 3"><path d="M0 0 H7 L3.5 3.2 Z" fill="#5a5a5a"/></svg>
<svg style="position:absolute;left:543px;top:350px" width="7" height="3" viewBox="0 0 7 3"><path d="M0 0 H7 L3.5 3.2 Z" fill="#5a5a5a"/></svg>
<svg style="position:absolute;left:469px;top:398px" width="7" height="4" viewBox="0 0 7 4"><path d="M0 0 H7 L3.5 3.2 Z" fill="#5a5a5a"/></svg>
<svg style="position:absolute;left:482px;top:398px" width="10" height="3" viewBox="0 0 10 3"><rect x="0.5" y="0.5" width="2" height="2" fill="#555"/><rect x="3.8" y="0.5" width="2" height="2" fill="#555"/><rect x="7.1" y="0.5" width="2" height="2" fill="#555"/></svg>
<svg style="position:absolute;left:930px;top:230px" width="7" height="3" viewBox="0 0 7 3"><path d="M0 0 H7 L3.5 3.2 Z" fill="#5a5a5a"/></svg>
<svg style="position:absolute;left:930px;top:254px" width="7" height="3" viewBox="0 0 7 3"><path d="M0 0 H7 L3.5 3.2 Z" fill="#5a5a5a"/></svg>
<svg style="position:absolute;left:930px;top:278px" width="7" height="3" viewBox="0 0 7 3"><path d="M0 0 H7 L3.5 3.2 Z" fill="#5a5a5a"/></svg>
<svg style="position:absolute;left:930px;top:302px" width="7" height="3" viewBox="0 0 7 3"><path d="M0 0 H7 L3.5 3.2 Z" fill="#5a5a5a"/></svg>
<svg style="position:absolute;left:930px;top:350px" width="7" height="3" viewBox="0 0 7 3"><path d="M0 0 H7 L3.5 3.2 Z" fill="#5a5a5a"/></svg>
<svg style="position:absolute;left:1277px;top:206px" width="7" height="3" viewBox="0 0 7 3"><path d="M0 0 H7 L3.5 3.2 Z" fill="#5a5a5a"/></svg>
<svg style="position:absolute;left:1277px;top:230px" width="7" height="3" viewBox="0 0 7 3"><path d="M0 0 H7 L3.5 3.2 Z" fill="#5a5a5a"/></svg>
<svg style="position:absolute;left:1277px;top:254px" width="7" height="3" viewBox="0 0 7 3"><path d="M0 0 H7 L3.5 3.2 Z" fill="#5a5a5a"/></svg>
<svg style="position:absolute;left:1277px;top:278px" width="7" height="3" viewBox="0 0 7 3"><path d="M0 0 H7 L3.5 3.2 Z" fill="#5a5a5a"/></svg>
<svg style="position:absolute;left:1277px;top:302px" width="7" height="3" viewBox="0 0 7 3"><path d="M0 0 H7 L3.5 3.2 Z" fill="#5a5a5a"/></svg>
<svg style="position:absolute;left:1277px;top:326px" width="7" height="3" viewBox="0 0 7 3"><path d="M0 0 H7 L3.5 3.2 Z" fill="#5a5a5a"/></svg>
</body></html>
